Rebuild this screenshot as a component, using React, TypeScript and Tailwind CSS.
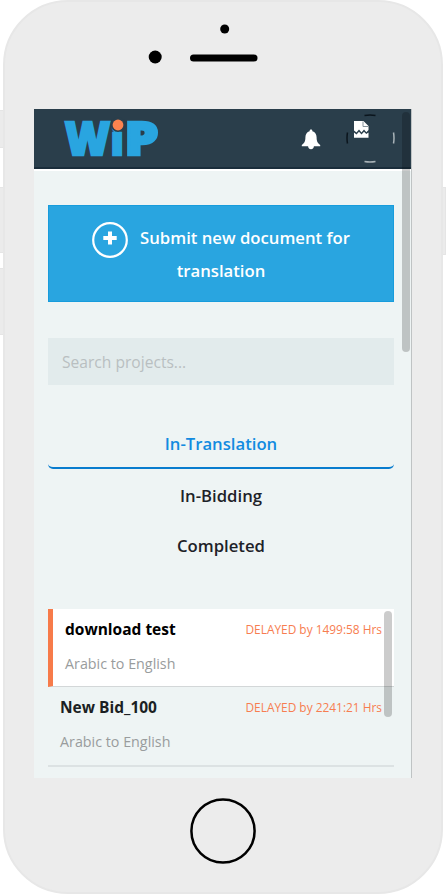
import React from "react";

function Logo() {
  return (
    <svg width="98" height="76" viewBox="0 -18 98 76" className="ml-[29px] block font-['Open_Sans',sans-serif] font-extrabold" fill="#29a5e0" stroke="#29a5e0">
      <text y="36.500" strokeWidth="2.600" strokeLinejoin="miter">
        <tspan x="2" fontSize="46" textLength="45" lengthAdjust="spacingAndGlyphs">W</tspan>
        <tspan x="48" fontSize="38">i</tspan>
        <tspan x="61.500" fontSize="46" textLength="34" lengthAdjust="spacingAndGlyphs">P</tspan>
      </text>
      <circle cx="55" cy="6.500" r="7.400" fill="#2a3e4b" stroke="none" />
      <circle cx="55" cy="7" r="5.400" fill="#fb834f" stroke="none" />
    </svg>
  );
}

function Bell() {
  return (
    <svg width="20" height="21" viewBox="0 0 20 21" fill="#fff" className="block">
      <path d="M8.600 2.200C8.600 1.200 9 .6 10 .6s1.400.6 1.400 1.600c2.700.7 4.200 3 4.200 6.100 0 4.200 1 5.800 3.600 7.700v1.300H.8V16c2.600-1.900 3.600-3.500 3.600-7.700 0-3.100 1.500-5.400 4.200-6.100zM7 17h6c-.3 2.200-1.400 3.200-3 3.200S7.300 19.200 7 17z" />
    </svg>
  );
}

function Avatar() {
  return (
    <svg width="50" height="50" viewBox="0 0 50 50" fill="none" className="block">
      <path d="M18.500 2.500Q24 1.500 29.500 2.500M1.500 19.500Q.5 25 1.500 30.500" stroke="#0b151d" strokeWidth="1.500" />
      <path d="M18.500 48.500Q24 49.500 29.500 48.500M47.500 19.500Q48.500 25 47.500 30.500" stroke="#a9b3b8" strokeWidth="1.500" />
      <g transform="translate(0 1)">
        <path d="M8 7h9.500l5 5v4l-2.200 2.200-2.300-2.800-2.500 3-2.500-3-2.500 3-2.500-2z" fill="#fff" />
        <path d="M8 18.500l2.500 2 2.500-2.700 2.500 2.700 2.500-2.700 2.300 2.200 2.200-1.500V23.800H8z" fill="#fff" />
        <path d="M17 7.500v5h5" stroke="#87939a" strokeWidth="1" />
      </g>
    </svg>
  );
}

function Project({ title, delay, active = false }: { title: string; delay: string; active?: boolean }) {
  return (
    <article className={active ? "h-[78px] border-b border-l-5 border-b-[#d3d7d8] border-l-[#f77b4a] bg-white pl-3" : "h-[80px] border-b-2 border-[#dce2e3] pl-3"}>
      <div className="flex h-[40px] items-center justify-between pr-3">
        <h2 className={active ? "text-[15.500px] font-bold leading-[20px] text-black" : "text-[15.500px] font-bold leading-[20px] text-[#1b1f23]"}>{title}</h2>
        <span className="pt-px text-[11.900px] text-[#f77d50]">{delay}</span>
      </div>
      <p className="mt-[5px] text-[14.300px] leading-[20px] text-[#999c9d]">Arabic to English</p>
    </article>
  );
}

export default function App() {
  return (
    <div className="relative h-[894px] w-[446px] overflow-hidden bg-white font-['Open_Sans','Noto_Sans',sans-serif]">
      <i className="absolute left-0 top-[110px] h-[38px] w-2 border-y border-[#e5e5e5] bg-[#ebebeb]" />
      <i className="absolute left-0 top-[187px] h-[66px] w-2 border-y border-[#e5e5e5] bg-[#ebebeb]" />
      <i className="absolute left-0 top-[268px] h-[67px] w-2 border-y border-[#e5e5e5] bg-[#ebebeb]" />
      <i className="absolute right-0 top-[187px] h-[68px] w-2 border border-[#e5e5e5] bg-[#ebebeb]" />
      <main className="relative mx-[3px] h-[894px] rounded-[65px] border-2 border-[#e7e7e7] bg-[#ececec]">
        <svg width="116" height="44" viewBox="146 22 116 44" className="absolute left-[141px] top-5">
          <circle cx="224.700" cy="29" r="4.500" />
          <circle cx="155.200" cy="57" r="6.500" />
          <rect x="190" y="54.500" width="67.500" height="7" rx="3.500" />
        </svg>
        <div className="h-[107px]" />
        <section className="relative ml-[29px] h-[669px] w-[378px] overflow-hidden border-r border-[#bfc3c4] bg-[#eef4f4]">
          <header className="flex h-[60px] w-[378px] items-center border-b-2 border-[#1a2d3b] bg-[#2a3e4b] shadow-[0_2px_0_#fff]">
            <Logo />
            <div className="ml-[140px] mt-[2px]"><Bell /></div>
            <div className="ml-[25px]"><Avatar /></div>
          </header>
          <div className="pl-[14px] pr-[17px]">
            <button className="mt-[36px] block h-[97px] w-full border border-[#179cdc] bg-[#29a5e0] text-center text-[16.700px] font-semibold leading-[33px] text-white">
              <span className="flex items-center justify-center">
                <svg width="36" height="36" viewBox="0 0 36 36" className="mr-3 mt-[2px] -mb-[4px]" fill="none" stroke="#fff">
                  <circle cx="18" cy="18" r="16.800" strokeWidth="2.200" />
                  <path d="M18 9.500v13M11.300 16h13.400" strokeWidth="4" />
                </svg>
                Submit new document for
              </span>
              <span className="block">translation</span>
            </button>
            <input aria-label="Search projects" placeholder="Search projects..." className="mt-[36px] block h-[47px] w-full bg-[#e2ebec] px-[14px] text-[15.600px] placeholder:text-[#b9bfc1]" />
            <nav className="mt-[34px] text-center text-[16.700px] font-semibold text-[#1d2228]">
              <div className="h-[50px] rounded-b-[5px] border-b-2 border-[#087cce] leading-[49px] text-[#128be0]">In-Translation</div>
              <div className="h-[50px] leading-[54px]">In-Bidding</div>
              <div className="h-[50px] leading-[54px]">Completed</div>
            </nav>
            <div className="relative mt-[40px]">
              <Project active title="download test" delay="DELAYED by 1499:58 Hrs" />
              <Project title="New Bid_100" delay="DELAYED by 2241:21 Hrs" />
              <div className="absolute right-[2px] top-[2px] h-[106px] w-[8px] rounded-full bg-black/20" />
            </div>
          </div>
          <div className="absolute right-[1px] top-[3px] h-[240px] w-[8px] rounded-full bg-black/20" />
        </section>
        <svg width="66" height="66" viewBox="0 0 66 66" fill="none" className="mx-auto mt-[20px] block">
          <circle cx="33" cy="33" r="31.600" stroke="#000" strokeWidth="2.500" />
        </svg>
      </main>
    </div>
  );
}
